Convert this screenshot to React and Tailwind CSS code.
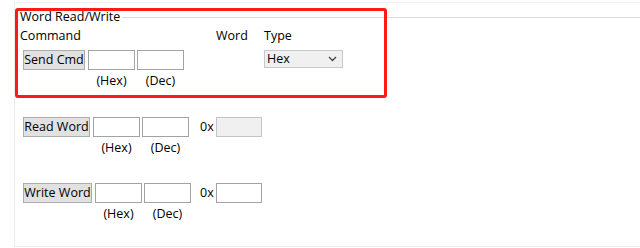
import React from 'react';

const font = { fontFamily: '"Open Sans", "Noto Sans", sans-serif' };

const Btn = ({ label, w }) => (
  <div className={`${w} h-[20px] bg-[#e1e1e1] border border-[#adadad] flex items-center justify-center text-[12.5px] leading-none whitespace-nowrap`}>
    {label}
  </div>
);

const Box = ({ w = 'w-[47px]', dim }) => (
  <div className={`${w} h-[20px] border ${dim ? 'bg-[#f0f0f0] border-[#c4c4c4]' : 'bg-white border-[#a3a3a3]'}`} />
);

const Labels = ({ offset }) => (
  <div className={`flex h-4 items-center ${offset} text-[12.5px] leading-4`}>
    <div className="w-[47px] text-center">(Hex)</div>
    <div className="w-[47px] ml-[2px] text-center">(Dec)</div>
  </div>
);

const WordRow = ({ label, bw, gap, dim, labelsOffset }) => (
  <>
    <div className="flex items-center pl-[8px]">
      <Btn label={label} w={bw} />
      <div className="ml-[3px]"><Box /></div>
      <div className="ml-[2px]"><Box /></div>
      <div className={`${gap} w-[16px] text-[12.5px] leading-4`}>0x</div>
      <Box w="w-[46px]" dim={dim} />
    </div>
    <div className="mt-[3px]">
      <Labels offset={labelsOffset} />
    </div>
  </>
);

export default function App() {
  return (
    <div className="w-[640px] h-[248px] bg-white overflow-hidden relative text-black" style={font}>
      <div className="pt-[2px] pl-[14px]">
        <div className="h-[245px] border-l border-t border-b border-[#ececec] border-t-[#f2f2f2]">
          {/* group box */}
          <div className="pt-[6px]">
            <div className="flex items-center h-4 pl-[5px]">
              <span className="text-[12.5px] leading-4">Word Read/Write</span>
              <div className="flex-1 h-px bg-[#dedede] ml-[2px]" />
            </div>
            <div className="flex items-center h-4 mt-[3px] pl-[5px] text-[12.5px] leading-4">
              <div className="w-[196px]">Command</div>
              <div className="w-[48px]">Word</div>
              <div>Type</div>
            </div>
            <div className="flex items-start mt-[6px] pl-[8px]">
              <Btn label="Send Cmd" w="w-[62px]" />
              <div className="ml-[3px]"><Box /></div>
              <div className="ml-[2px]"><Box /></div>
              <div className="ml-[80px] w-[79px] h-[18px] bg-[#f0f0f0] border border-[#c8c8c8] flex items-center justify-between pl-[2px] pr-[5px] text-[12.5px]">
                <span>Hex</span>
                <svg width="9" height="6" viewBox="0 0 9 6" fill="none" stroke="#444" strokeWidth="1.3">
                  <path d="M1 1l3.5 3.5L8 1" />
                </svg>
              </div>
            </div>
            <div className="mt-[3px]">
              <Labels offset="pl-[73px]" />
            </div>
          </div>

          <div className="mt-[28px]">
            <WordRow label="Read Word" bw="w-[67px]" gap="ml-[11px]" dim labelsOffset="pl-[78px]" />
          </div>
          <div className="mt-[27px]">
            <WordRow label="Write Word" bw="w-[69px]" gap="ml-[9px]" labelsOffset="pl-[80px]" />
          </div>
        </div>
      </div>

      {/* red highlight annotation */}
      <div className="absolute left-[15px] top-[8px] w-[372px] h-[90px] border-[3px] border-[#ff1a1a] rounded-[3px] pointer-events-none" />
    </div>
  );
}
